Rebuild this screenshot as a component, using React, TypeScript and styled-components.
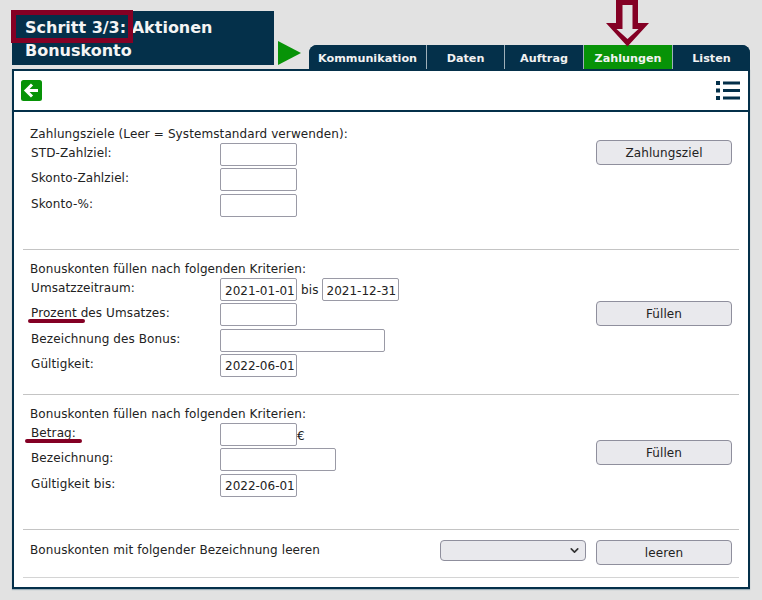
import React from 'react';
import styled, { createGlobalStyle } from 'styled-components';
import { ChevronDown } from 'lucide-react';

const navy = '#04304a';
const green = '#079307';
const maroon = '#840024';

const GlobalStyle = createGlobalStyle`
  html, body {
    margin: 0;
    background: #e2e2e2;
    font-family: 'DejaVu Sans', Verdana, sans-serif;
    font-size: 12px;
    color: #222;
  }
`;

const Page = styled.div`
  position: relative;
  width: 762px;
  height: 600px;
  padding: 11px 12px 0;
  box-sizing: border-box;
  overflow: hidden;
`;

const Header = styled.header`
  display: flex;
  height: 58px;
`;

const TitleBox = styled.h1`
  width: 262px;
  height: 54px;
  margin: 0;
  padding: 5px 13px 0;
  box-sizing: border-box;
  background: ${navy};
  color: #f4f4f4;
  font-size: 16px;
  line-height: 23px;
  font-weight: bold;
`;

const StepMark = styled.div`
  position: absolute;
  left: 11px;
  top: 10px;
  width: 122px;
  height: 33px;
  box-sizing: border-box;
  border: 5px solid ${maroon};
`;

const Triangle = styled.div`
  width: 0;
  height: 0;
  margin: 30px 8px 0 4px;
  border-left: 23px solid ${green};
  border-top: 12.5px solid transparent;
  border-bottom: 12.5px solid transparent;
`;

const Tabs = styled.nav`
  display: flex;
  align-self: flex-end;
  height: 24px;
  width: 441px;
  background: ${navy};
  border-radius: 8px 8px 0 0;
  overflow: hidden;
`;

const Tab = styled.div<{ $width: number; $active?: boolean }>`
  width: ${(p) => p.$width}px;
  flex: none;
  display: flex;
  align-items: center;
  justify-content: center;
  padding-top: 3px;
  box-sizing: border-box;
  font-size: 11.2px;
  font-weight: bold;
  color: #f2f2f2;
  background: ${(p) => (p.$active ? green : navy)};
  border-right: 1px solid #9fb0ba;

  &:last-child {
    border-right: 0;
  }
`;

const DownArrow = styled.svg`
  position: absolute;
  left: 605px;
  top: 0;
`;

const Panel = styled.main`
  width: 738px;
  height: 520px;
  box-sizing: border-box;
  background: #fff;
  border: 2px solid ${navy};
  box-shadow: 0 1px 1px #9fb0ba;
`;

const Toolbar = styled.div`
  display: flex;
  align-items: center;
  justify-content: space-between;
  height: 39px;
  padding: 0 8px 0 7px;
  border-bottom: 2px solid ${navy};
`;

const Content = styled.div`
  padding: 0 9px;
`;

const Section = styled.section<{ $height: number; $top: number }>`
  display: flex;
  justify-content: space-between;
  height: ${(p) => p.$height}px;
  padding-top: ${(p) => p.$top}px;
  box-sizing: border-box;
  border-bottom: 1px solid #c4c4c4;
`;

const Form = styled.div`
  padding-left: 7px;
`;

const Heading = styled.div`
  height: 14px;
  line-height: 14px;
  letter-spacing: 0.1px;
  color: #222;
  margin-bottom: 2px;
`;

const Row = styled.div`
  display: grid;
  grid-template-columns: 189px auto;
  height: 25.3px;
  padding-left: 1px;
  letter-spacing: 0.1px;
`;

const Label = styled.label`
  position: relative;
  align-self: start;
  line-height: 14px;
  margin-top: 3px;
`;

const Underline = styled.span<{ $left: number; $width: number }>`
  position: absolute;
  left: ${(p) => p.$left}px;
  top: 13px;
  width: ${(p) => p.$width}px;
  height: 4px;
  border-radius: 2px;
  background: ${maroon};
`;

const Fields = styled.div`
  display: flex;
  align-items: flex-start;
`;

const Input = styled.input<{ $width?: number }>`
  width: ${(p) => p.$width ?? 77}px;
  height: 23px;
  box-sizing: border-box;
  padding: 2px 0 0 4px;
  border: 1px solid #9a9aa6;
  border-radius: 2px;
  background: #fff;
  font-family: inherit;
  font-size: 12px;
  letter-spacing: 0;
  color: #222;
  outline: none;
`;

const Between = styled.span`
  line-height: 24px;
  margin: 0 3px 0 4px;
`;

const Unit = styled.span`
  line-height: 26px;
`;

const Button = styled.button<{ $offset: number }>`
  width: 136px;
  height: 25px;
  margin: ${(p) => p.$offset}px 7px 0 0;
  flex: none;
  padding: 1px 0 0;
  border: 1px solid #8f8f9d;
  border-radius: 4px;
  background: #e9e9ed;
  font-family: inherit;
  font-size: 12px;
  letter-spacing: 0.1px;
  color: #222;
`;

const ClearRow = styled.section`
  display: flex;
  align-items: flex-start;
  height: 48px;
  padding-top: 10px;
  box-sizing: border-box;
  border-bottom: 1px solid #d4d4d4;
`;

const ClearText = styled.span`
  flex: 1;
  padding: 3px 0 0 7px;
  letter-spacing: 0.1px;
`;

const SelectWrap = styled.div`
  position: relative;
  width: 146px;
  height: 21px;
  margin-right: 10px;
  color: #333;

  svg {
    position: absolute;
    right: 5px;
    top: 4px;
    pointer-events: none;
  }
`;

const Select = styled.select`
  appearance: none;
  display: block;
  width: 100%;
  height: 100%;
  border: 1px solid #8f8f9d;
  border-radius: 4px;
  background: #e9e9ed;
`;

const BackIcon = () => (
  <svg width="21" height="21" viewBox="0 0 21 21">
    <rect x="0" y="0" width="21" height="21" rx="2.5" fill={green} />
    <path
      d="M17 10.5H5.5M11 4.5L5 10.5L11 16.5"
      fill="none"
      stroke="#fff"
      strokeWidth="3"
    />
  </svg>
);

const ListIcon = () => (
  <svg width="24" height="21" viewBox="0 0 24 21" fill={navy}>
    <rect x="0" y="1" width="4" height="4" />
    <rect x="7" y="1.5" width="17" height="3" />
    <rect x="0" y="8.5" width="4" height="4" />
    <rect x="7" y="9" width="17" height="3" />
    <rect x="0" y="16" width="4" height="4" />
    <rect x="7" y="16.5" width="17" height="3" />
  </svg>
);

const App: React.FC = () => (
  <Page>
    <GlobalStyle />
    <Header>
      <TitleBox>
        Schritt 3/3: Aktionen
        <br />
        Bonuskonto
      </TitleBox>
      <Triangle />
      <Tabs>
        <Tab $width={118}>Kommunikation</Tab>
        <Tab $width={78}>Daten</Tab>
        <Tab $width={79}>Auftrag</Tab>
        <Tab $width={89} $active>
          Zahlungen
        </Tab>
        <Tab $width={77}>Listen</Tab>
      </Tabs>
    </Header>
    <StepMark />
    <DownArrow width="45" height="47" viewBox="0 0 45 47">
      <path
        d="M11 0V23H1L22.5 46.5L44 23H33V0ZM17.5 5V29H11.5L22.5 39L33.5 29H27.5V5Z"
        fill={maroon}
        fillRule="evenodd"
      />
    </DownArrow>
    <Panel>
      <Toolbar>
        <BackIcon />
        <ListIcon />
      </Toolbar>
      <Content>
        <Section $height={138} $top={15}>
          <Form>
            <Heading>Zahlungsziele (Leer = Systemstandard verwenden):</Heading>
            <Row>
              <Label>STD-Zahlziel:</Label>
              <Fields>
                <Input />
              </Fields>
            </Row>
            <Row>
              <Label>Skonto-Zahlziel:</Label>
              <Fields>
                <Input />
              </Fields>
            </Row>
            <Row>
              <Label>Skonto-%:</Label>
              <Fields>
                <Input />
              </Fields>
            </Row>
          </Form>
          <Button $offset={13}>Zahlungsziel</Button>
        </Section>
        <Section $height={145} $top={12}>
          <Form>
            <Heading>Bonuskonten füllen nach folgenden Kriterien:</Heading>
            <Row>
              <Label>Umsatzzeitraum:</Label>
              <Fields>
                <Input defaultValue="2021-01-01" />
                <Between>bis</Between>
                <Input defaultValue="2021-12-31" />
              </Fields>
            </Row>
            <Row>
              <Label>
                Prozent des Umsatzes:
                <Underline $left={-3} $width={57} />
              </Label>
              <Fields>
                <Input />
              </Fields>
            </Row>
            <Row>
              <Label>Bezeichnung des Bonus:</Label>
              <Fields>
                <Input $width={165} />
              </Fields>
            </Row>
            <Row>
              <Label>Gültigkeit:</Label>
              <Fields>
                <Input defaultValue="2022-06-01" />
              </Fields>
            </Row>
          </Form>
          <Button $offset={39}>Füllen</Button>
        </Section>
        <Section $height={135} $top={12}>
          <Form>
            <Heading>Bonuskonten füllen nach folgenden Kriterien:</Heading>
            <Row>
              <Label>
                Betrag:
                <Underline $left={-6} $width={57} />
              </Label>
              <Fields>
                <Input />
                <Unit>€</Unit>
              </Fields>
            </Row>
            <Row>
              <Label>Bezeichnung:</Label>
              <Fields>
                <Input $width={116} />
              </Fields>
            </Row>
            <Row>
              <Label>Gültigkeit bis:</Label>
              <Fields>
                <Input defaultValue="2022-06-01" />
              </Fields>
            </Row>
          </Form>
          <Button $offset={33}>Füllen</Button>
        </Section>
        <ClearRow>
          <ClearText>Bonuskonten mit folgender Bezeichnung leeren</ClearText>
          <SelectWrap>
            <Select />
            <ChevronDown size={13} strokeWidth={3} />
          </SelectWrap>
          <Button $offset={0}>leeren</Button>
        </ClearRow>
      </Content>
    </Panel>
  </Page>
);

export default App;
